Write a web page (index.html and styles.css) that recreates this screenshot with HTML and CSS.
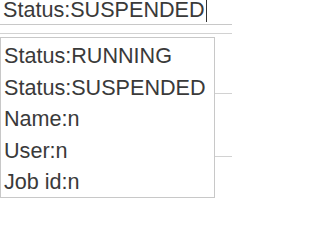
FILE: index.html
```html
<!DOCTYPE html>
<html>
<head>
<meta charset="utf-8">
<link rel="stylesheet" href="styles.css">
</head>
<body>
<div class="search">
  <div class="field"><span class="value">Status:SUSPENDED</span><span class="caret"></span></div>
</div>
<div class="rows">
  <div class="row"></div>
  <div class="row"></div>
  <div class="row"></div>
</div>
<ul class="menu">
  <li>Status:RUNNING</li>
  <li>Status:SUSPENDED</li>
  <li>Name:n</li>
  <li>User:n</li>
  <li>Job id:n</li>
</ul>
</body>
</html>
```
FILE: styles.css
```css
html, body {
  margin: 0;
  padding: 0;
  background: #fff;
  width: 232px;
  height: 207px;
  overflow: hidden;
  position: relative;
  font-family: "Liberation Sans", Arial, sans-serif;
  color: #3a3a3a;
}
.search {
  height: 24px;
  border-bottom: 1px solid #c8c8c8;
  overflow: hidden;
}
.field {
  display: flex;
  align-items: flex-start;
  padding-left: 3px;
  margin-top: -3px;
  font-size: 21.6px;
  line-height: 25px;
}
.caret {
  width: 1px;
  height: 22px;
  margin-top: 3px;
  margin-left: 1px;
  background: #333;
}
.rows {
  margin-top: 8px;
}
.row {
  height: 59px;
  border-top: 1px solid #d2d2d2;
}
.row:nth-child(2) {
  height: 62px;
}
.menu {
  position: absolute;
  left: 0;
  top: 37px;
  margin: 0;
  padding: 2px 0 0 3px;
  list-style: none;
  background: #fff;
  border: 1px solid #c8c8c8;
  box-sizing: border-box;
  width: 215px;
  height: 161px;
  font-size: 21.6px;
  line-height: 31.5px;
}
```
